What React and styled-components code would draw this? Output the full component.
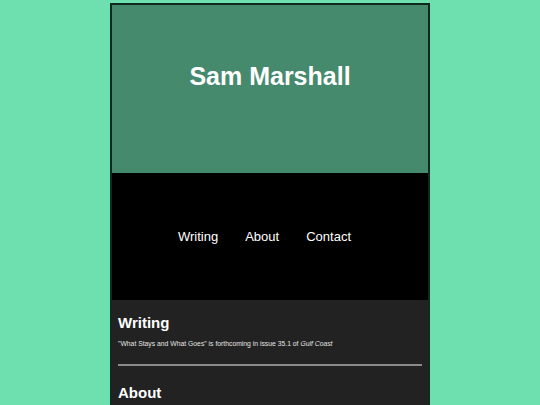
import React from "react";
import styled, { createGlobalStyle } from "styled-components";

const GlobalStyle = createGlobalStyle`
  body {
    margin: 0;
    background-color: #6ee0b0;
    font-family: "Liberation Sans", Arial, sans-serif;
  }
`;

const Page = styled.div`
  width: 316px;
  margin: 3px auto 0;
  border: 2px solid #10291e;
  border-bottom: none;
`;

const Header = styled.header`
  height: 168px;
  background-color: #468a6e;
  display: flex;
  justify-content: center;
  padding-top: 56px;
  box-sizing: border-box;
`;

const Title = styled.h1`
  margin: 0;
  color: #fff;
  font-size: 25px;
  font-weight: 700;
  line-height: 30px;
`;

const Nav = styled.nav`
  height: 127px;
  background-color: #000;
  display: flex;
  align-items: center;
  justify-content: center;
  gap: 16px;
`;

const NavLink = styled.a`
  color: #fff;
  font-size: 13px;
  text-decoration: none;
  margin-right: 11px;
`;

const Content = styled.main`
  background-color: #222;
  padding: 14px 6px 10px;
`;

const Section = styled.section`
  padding-bottom: ${(p) => (p.$last ? "0" : "16px")};
  border-bottom: ${(p) => (p.$last ? "none" : "2px solid #8a8a8a")};
  margin-bottom: ${(p) => (p.$last ? "0" : "18px")};
`;

const Heading = styled.h2`
  margin: 0 0 7px;
  color: #fff;
  font-size: 15px;
  font-weight: 700;
  line-height: 18px;
`;

const Text = styled.p`
  margin: 0;
  color: #e4e4e4;
  font-size: 6.8px;
  line-height: 9px;
`;

export default function App() {
  return (
    <>
      <GlobalStyle />
      <Page>
        <Header>
          <Title>Sam Marshall</Title>
        </Header>
        <Nav>
          <NavLink href="#writing">Writing</NavLink>
          <NavLink href="#about">About</NavLink>
          <NavLink href="#contact">Contact</NavLink>
        </Nav>
        <Content>
          <Section>
            <Heading>Writing</Heading>
            <Text>
              "What Stays and What Goes" is forthcoming in issue 35.1 of <em>Gulf Coast</em>
            </Text>
          </Section>
          <Section $last>
            <Heading>About</Heading>
            <Text>&nbsp;</Text>
          </Section>
        </Content>
      </Page>
    </>
  );
}
